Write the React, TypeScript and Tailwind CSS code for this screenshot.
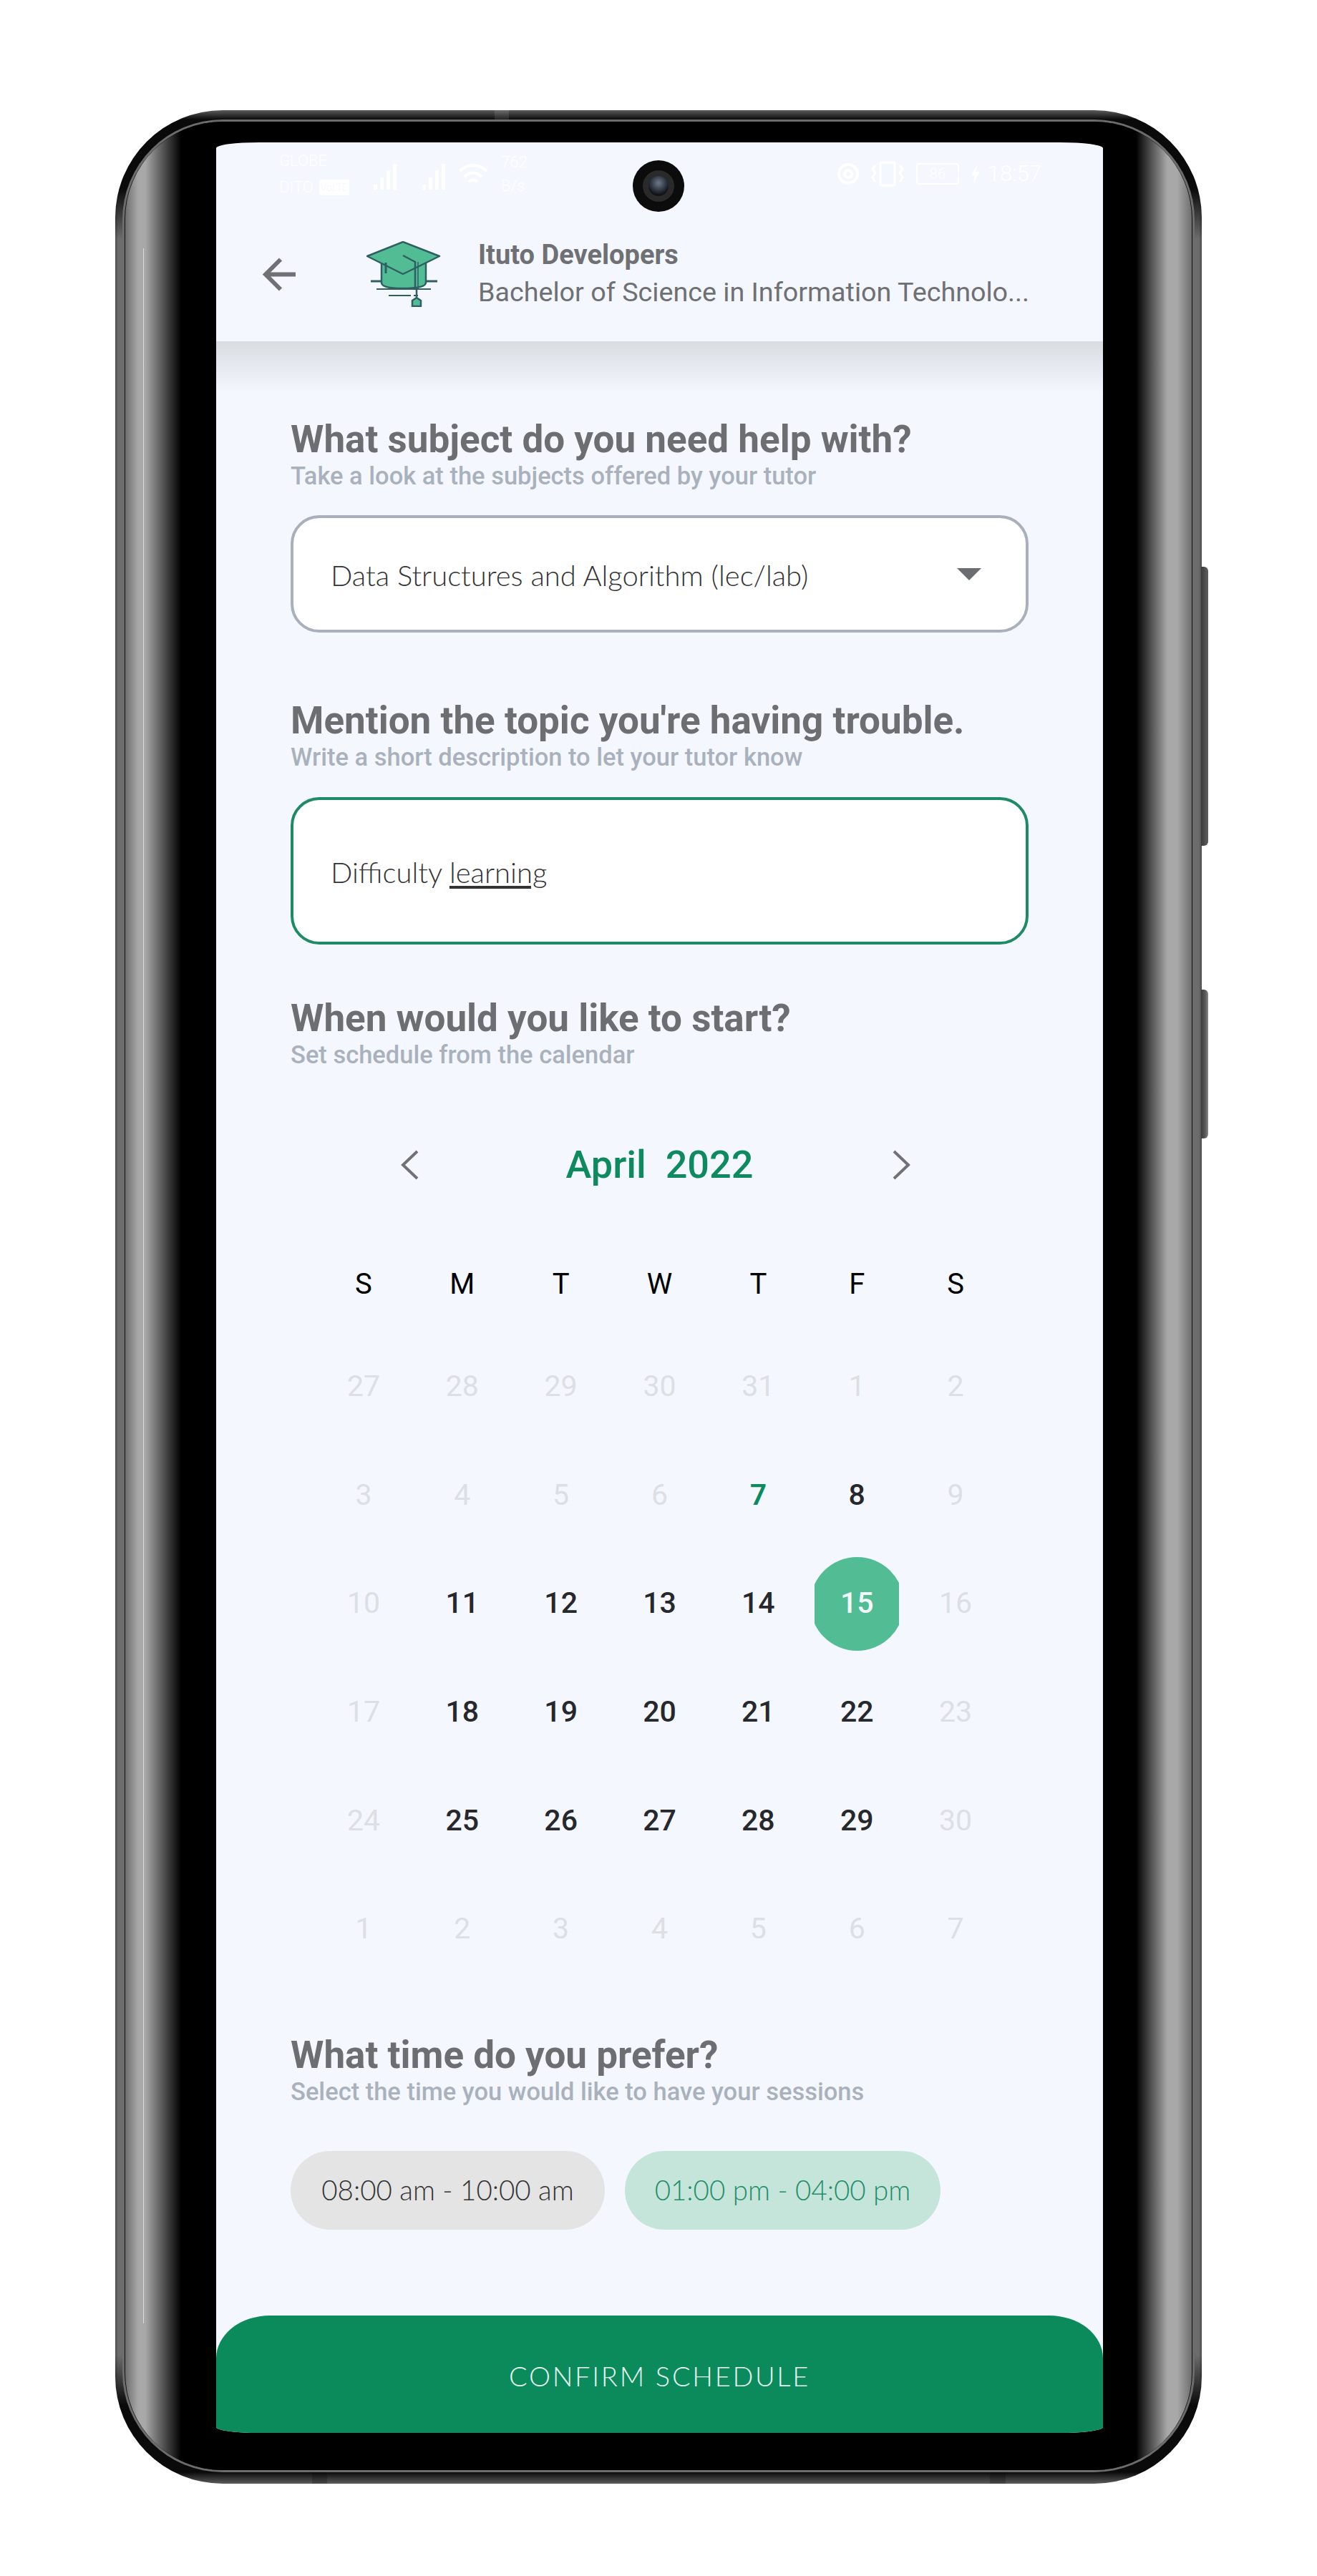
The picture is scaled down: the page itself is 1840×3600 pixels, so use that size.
const roboto = "font-['Roboto',sans-serif]";
const thin = "font-['Lato','Open_Sans',sans-serif] font-light";

const weekDays = ["S", "M", "T", "W", "T", "F", "S"];

// m = greyed out, d = normal, g = green, s = selected
const days: [string, string][] = [
  ["27", "m"], ["28", "m"], ["29", "m"], ["30", "m"], ["31", "m"], ["1", "m"], ["2", "m"],
  ["3", "m"], ["4", "m"], ["5", "m"], ["6", "m"], ["7", "g"], ["8", "d"], ["9", "m"],
  ["10", "m"], ["11", "d"], ["12", "d"], ["13", "d"], ["14", "d"], ["15", "s"], ["16", "m"],
  ["17", "m"], ["18", "d"], ["19", "d"], ["20", "d"], ["21", "d"], ["22", "d"], ["23", "m"],
  ["24", "m"], ["25", "d"], ["26", "d"], ["27", "d"], ["28", "d"], ["29", "d"], ["30", "m"],
  ["1", "m"], ["2", "m"], ["3", "m"], ["4", "m"], ["5", "m"], ["6", "m"], ["7", "m"],
];

function CapLogo() {
  return (
    <svg width="104" height="92" viewBox="0 0 104 92" fill="none" stroke="#2f5f62" strokeWidth="2.5" strokeLinejoin="round">
      <path d="M21 22 V58 Q21 66 50 66 Q83 66 83 58 V22 Z" fill="#52bd94" />
      <path d="M1 21 L51 1 L102 21 L51 46 Z" fill="#52bd94" />
      <path d="M51 20 L68 29 V68" />
      <path d="M72 29 V68" strokeWidth="1.5" />
      <path d="M27 30 V45" strokeWidth="3" />
      <path d="M6 56 H21 M83 56 H99" strokeWidth="3" />
      <path d="M14 67 H90" strokeWidth="2" />
      <path d="M31 76 H62 M66 76 H72" strokeWidth="2" />
      <path d="M70 68 V79 L76 83 V91 H64 V83 L70 79" fill="#52bd94" />
    </svg>
  );
}

function BackArrow() {
  return (
    <svg width="75" height="75" viewBox="0 0 75 75" fill="none" stroke="#707174" strokeWidth="6">
      <path d="M59 37.5 H18" />
      <path d="M38 16.5 L17 37.5 L38 58.5" />
    </svg>
  );
}

function Chevron({ right }: { right?: boolean }) {
  return (
    <svg width="26" height="42" viewBox="0 0 26 42" fill="none" stroke="#707174" strokeWidth="4">
      <path d={right ? "M3 2 L23 21 L3 40" : "M23 2 L3 21 L23 40"} />
    </svg>
  );
}

function StatusBar() {
  return (
    <div className="flex h-[88px] shrink-0 items-center pl-[88px] pr-[86px] font-['Roboto',sans-serif] text-white">
      <div className="w-[105px] text-[22px] leading-[37px] font-light">
        <div>GLOBE</div>
        <div className="flex items-center gap-[8px]">
          DITO <span className="rounded-[2px] bg-white px-[2px] text-[14px] leading-[22px] text-[#f4f7fe]">VoLTE</span>
        </div>
      </div>
      <svg className="ml-[27px] mt-[6px]" width="106" height="40" viewBox="0 0 106 40" fill="white">
        <path d="M0 32h5v7H0zM9 22h5v17H9zM18 12h5v27h-5zM27 3h5v36h-5zM68 32h5v7h-5zM77 22h5v17h-5zM86 12h5v27h-5zM95 3h5v36h-5z" />
      </svg>
      <svg className="ml-[12px] mt-[4px]" width="42" height="34" viewBox="0 0 42 34" fill="none" stroke="white" strokeWidth="4">
        <path d="M2 11 Q21 -5 40 11M9 19 Q21 8 33 19M15 26 Q21 21 27 26" />
      </svg>
      <div className="ml-[18px] w-[50px] text-[22px] leading-[33px] font-light">
        <div>762</div>
        <div>B/s</div>
      </div>
      <div className="flex-1" />
      <svg width="38" height="30" viewBox="0 0 38 30" fill="none" stroke="white" strokeWidth="4">
        <circle cx="19" cy="15" r="13" />
        <circle cx="19" cy="15" r="5" />
      </svg>
      <svg className="ml-[12px]" width="48" height="36" viewBox="0 0 48 36" fill="none" stroke="white" strokeWidth="3">
        <rect x="14" y="2" width="20" height="32" rx="2" />
        <path d="M7 6 L3 11 L7 17 L3 23 L7 29M41 6 L45 11 L41 17 L45 23 L41 29" />
      </svg>
      <div className="ml-[16px] flex h-[30px] w-[60px] items-center justify-center rounded-[4px] border-2 border-white text-[20px] font-light">86</div>
      <svg className="ml-[16px]" width="14" height="26" viewBox="0 0 14 26" fill="white">
        <path d="M9 0 L1 15 H6 L4 26 L13 10 H8 Z" />
      </svg>
      <span className="ml-[10px] text-[31px] font-light">18:57</span>
    </div>
  );
}

function Heading({ title, sub }: { title: string; sub: string }) {
  return (
    <div className={roboto}>
      <h2 className="text-[53px] leading-[60px] font-bold text-[#6d6e72]">{title}</h2>
      <p className="text-[34.5px] leading-[42px] font-medium text-[#a9b2bc]">{sub}</p>
    </div>
  );
}

function Day({ label, kind }: { label: string; kind: string }) {
  if (kind === "s") {
    return (
      <div className="flex h-[132px] items-center justify-center">
        <div className="flex h-[132px] w-[118px] items-center justify-center overflow-hidden">
          <div className="flex h-[131px] w-[131px] shrink-0 items-center justify-center rounded-full bg-[#52bd94] text-[41px] font-medium text-[#f3f8f8]">
            {label}
          </div>
        </div>
      </div>
    );
  }
  const color = kind === "m" ? "text-[#dcdfe4] font-normal" : kind === "g" ? "text-[#0e8a5f] font-semibold" : "text-[#26282c] font-medium";
  return <div className={`flex h-[132px] items-center justify-center text-[41px] ${color}`}>{label}</div>;
}

export default function App() {
  return (
    <div className="min-h-[3600px] bg-white pl-[161px] pt-[154px]">
      <div className="relative h-[3317px] w-[1518px]">
        {/* side buttons */}
        <div className="absolute left-[1517px] top-[638px] h-[390px] w-[10px] rounded-r-[6px] bg-[linear-gradient(to_right,#3c3c3c,#5e5e5e)]" />
        <div className="absolute left-[1517px] top-[1229px] h-[208px] w-[10px] rounded-r-[6px] bg-[linear-gradient(to_right,#3c3c3c,#5a5a5a_60%,#8a8a8a)]" />

        {/* phone body */}
        <div className="h-full w-full overflow-hidden rounded-[150px] bg-[linear-gradient(to_bottom,#5c5c5c_0,#0a0a0a_13px,#0a0a0a_110px,transparent_180px,transparent_calc(100%-180px),#0a0a0a_calc(100%-110px),#0a0a0a_calc(100%-16px),#5c5c5c_100%),linear-gradient(to_right,#4c4c4c,#6c6c6c_4px,#6c6c6c_calc(100%-4px),#4c4c4c)] px-[10px] pb-[16px] pt-[13px]">
          <div className="h-full rounded-[140px] bg-[#6c6c6c] p-[3px]">
            <div className="h-full rounded-[137px] bg-[#101010] pl-[1px] pr-[1px]">
              <div className="flex h-full flex-col rounded-[136px] bg-[linear-gradient(to_right,#6e6e6e_0,#a8a8a8_18px,#a8a8a8_28px,#000_78px,#000_calc(100%-78px),#a8a8a8_calc(100%-34px),#a8a8a8_calc(100%-20px),#6e6e6e_100%)] pb-[52px] pl-[127px] pr-[124px] pt-[29px]">
                <div className="relative flex h-full flex-col overflow-hidden rounded-[60px/8px] bg-[#f4f7fe]">
                  <header className="h-[278px] shrink-0">
                    <StatusBar />
                    <div className="flex items-center pl-[52px] pt-[44px]">
                      <BackArrow />
                      <div className="ml-[83px]">
                        <CapLogo />
                      </div>
                      <div className={`ml-[52px] ${roboto} text-[#6f7074]`}>
                        <div className="text-[38px] leading-[50px] font-bold">Ituto Developers</div>
                        <div className="text-[37.7px] leading-[54px]">Bachelor of Science in Information Technolo...</div>
                      </div>
                    </div>
                  </header>

                  <main className="flex flex-1 flex-col bg-[linear-gradient(to_bottom,#d9dce1_0,#f4f7fe_72px)] px-[104px] pt-[107px]">
                    <Heading title="What subject do you need help with?" sub="Take a look at the subjects offered by your tutor" />
                    <div className={`mt-[34px] flex h-[164px] items-center justify-between rounded-[40px] border-4 border-[#a9afbb] bg-white pl-[52px] pr-[62px] ${thin} text-[40px] text-[#333]`}>
                      <span className="pt-[4px]">Data Structures and Algorithm (lec/lab)</span>
                      <div className="h-0 w-0 border-x-[17px] border-t-[17px] border-x-transparent border-t-[#6c6d70]" />
                    </div>

                    <div className="mt-[93px]">
                      <Heading title="Mention the topic you're having trouble." sub="Write a short description to let your tutor know" />
                    </div>
                    <div className={`mt-[35px] flex h-[206px] items-center rounded-[40px] border-4 border-[#1f8a66] bg-white pl-[52px] ${thin} text-[40px] text-[#333]`}>
                      <span className="pt-[4px]">
                        Difficulty <span className="underline underline-offset-4">learning</span>
                      </span>
                    </div>

                    <div className="mt-[73px]">
                      <Heading title="When would you like to start?" sub="Set schedule from the calendar" />
                    </div>

                    <div className={`mt-[103px] flex h-[60px] items-center pl-[154px] ${roboto}`}>
                      <Chevron />
                      <span className="w-[660px] whitespace-pre pl-[11px] text-center text-[54px] leading-[60px] font-medium text-[#0e8a5f]">April  2022</span>
                      <Chevron right />
                    </div>

                    <div className={`mx-[33px] mt-[113px] grid grid-cols-7 ${roboto}`}>
                      {weekDays.map((d, i) => (
                        <div key={i} className="text-center text-[40px] leading-[48px] font-normal text-black">
                          {d}
                        </div>
                      ))}
                    </div>
                    <div className={`mx-[33px] mt-[53px] grid grid-cols-7 gap-y-[19.6px] ${roboto}`}>
                      {days.map(([label, kind], i) => (
                        <Day key={i} label={label} kind={kind} />
                      ))}
                    </div>

                    <div className="mt-[80px]">
                      <Heading title="What time do you prefer?" sub="Select the time you would like to have your sessions" />
                    </div>
                    <div className={`mt-[62px] flex gap-[28px] ${thin} text-[38.5px]`}>
                      <div className="flex h-[110px] w-[439px] items-center justify-center rounded-[55px] bg-[#e4e4e4] text-[#333]">08:00 am - 10:00 am</div>
                      <div className="flex h-[110px] w-[441px] items-center justify-center rounded-[55px] bg-[#c5e4da] text-[#1f8f6a]">01:00 pm - 04:00 pm</div>
                    </div>
                  </main>

                  <button className={`flex h-[164px] shrink-0 items-center justify-center rounded-t-[75px_60px] bg-[#0b8a5c] pt-[4px] ${thin} text-[38px] tracking-[2.7px] text-[#e6f7f0]`}>
                    CONFIRM SCHEDULE
                  </button>

                  {/* front camera */}
                  <div className="absolute left-[582px] top-[25px] flex h-[72px] w-[72px] items-center justify-center rounded-full bg-[#0c0c0c]">
                    <div className="flex h-[44px] w-[44px] items-center justify-center rounded-full bg-[#2a2a2a]">
                      <div className="h-[28px] w-[28px] rounded-full bg-[radial-gradient(circle_at_50%_35%,#6d7a8c,#10131a_70%)]" />
                    </div>
                  </div>
                </div>
              </div>
            </div>
          </div>
        </div>

        {/* highlight seam on the left edge and antenna cuts */}
        <div className="absolute left-[39px] top-[193px] h-[2900px] w-[1px] bg-white opacity-60" />
        <div className="absolute left-[530px] top-0 h-[13px] w-[20px] bg-white/10" />
        <div className="absolute left-[275px] top-[3301px] h-[16px] w-[21px] bg-black/20" />
        <div className="absolute left-[1222px] top-[3301px] h-[16px] w-[22px] bg-black/20" />
      </div>
    </div>
  );
}
